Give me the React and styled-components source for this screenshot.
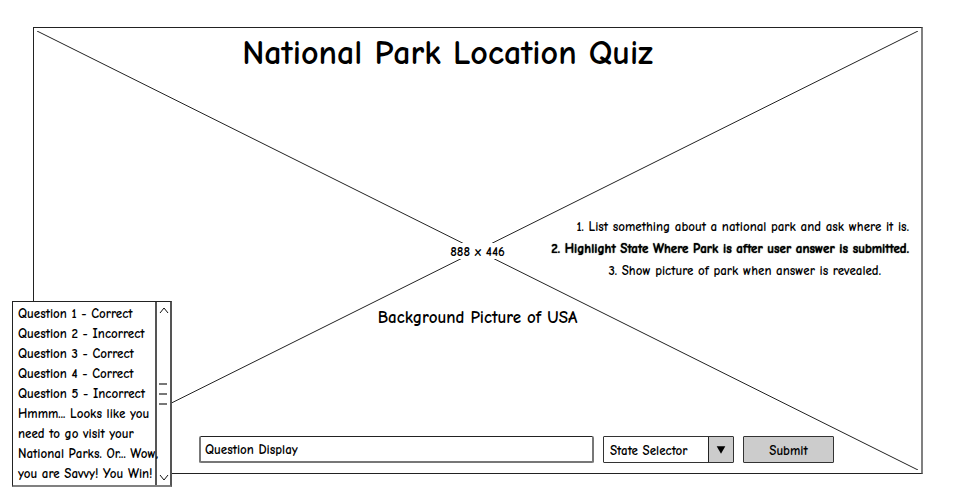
import React from "react";
import styled, { createGlobalStyle } from "styled-components";

const GlobalStyle = createGlobalStyle`
  *, *::before, *::after { box-sizing: border-box; }
  body {
    margin: 0;
    background: #fff;
    color: #000;
    font-family: "Comic Sans MS", "Comic Neue", "Noto Sans", sans-serif;
    font-size: 13px;
    font-weight: 700;
    line-height: 20px;
  }
  button, input, select { font: inherit; color: inherit; margin: 0; border-radius: 0; }
`;

const Page = styled.div`
  position: relative;
  display: flex;
  min-height: 100vh;
  padding: 27px 31px 26px 33px;
`;

const Board = styled.main`
  position: relative;
  flex: 1;
  display: flex;
  flex-direction: column;
  border: 1px solid #222;
  border-right: 2px solid #808080;
`;

const Backdrop = styled.svg`
  position: absolute;
  inset: 3px;
  width: calc(100% - 6px);
  height: calc(100% - 6px);
  stroke: #222;
  stroke-width: 1;
`;

const SizeLabel = styled.span`
  position: absolute;
  top: 50%;
  left: 50%;
  transform: translate(-50%, -50%);
  padding-top: 2px;
  background: #fff;
  line-height: 14px;
  white-space: nowrap;
`;

const Title = styled.h1`
  position: relative;
  margin: 0;
  padding: 0 60px 0 0;
  text-align: center;
  font-size: 34px;
  font-weight: 700;
  line-height: 50px;
`;

const Notes = styled.ol`
  position: relative;
  list-style: none;
  margin: auto 0 0;
  padding: 32px 12px 0 0;
  text-align: right;
  line-height: 22px;
`;

const Note = styled.li`
  text-shadow: ${(p) => (p.$strong ? "0 0 1px #000" : "none")};
  padding-right: ${(p) => (p.$inset ? 28 : 0)}px;
`;

const Caption = styled.p`
  position: relative;
  margin: 24px 0 auto;
  text-align: center;
  font-size: 17px;
  line-height: 24px;
`;

const AnswerBar = styled.form`
  position: relative;
  display: grid;
  grid-template-columns: 1fr 131px 91px;
  gap: 9px;
  height: 27px;
  margin: 0 87px 10px 165px;
`;

const QuestionField = styled.input`
  min-width: 0;
  padding: 2px 4px 0;
  background: #fff;
  border: 2px solid #777;
  border-top: 1px solid #222;
  border-radius: 2px;
`;

const SelectBox = styled.div`
  position: relative;
  display: grid;
`;

const StateSelect = styled.select`
  appearance: none;
  width: 100%;
  padding: 2px 30px 0 6px;
  background: linear-gradient(#ccc, #ccc) right / 24px 100% no-repeat #fff;
  border: 1px solid #333;
  border-radius: 1px;
`;

const SelectArrow = styled.svg`
  position: absolute;
  top: 1px;
  right: 1px;
  width: 25px;
  height: 25px;
  border-left: 1px solid #222;
  pointer-events: none;
`;

const SubmitButton = styled.button`
  padding: 2px 0 0;
  background: #ccc;
  border: 1px solid #333;
  border-radius: 1px;
`;

const Results = styled.aside`
  position: absolute;
  left: 12px;
  bottom: 13px;
  width: 160px;
  display: grid;
  grid-template-columns: 1fr 15px;
  background: #fff;
  border: 1px solid #222;
  border-right: 2px solid #555;
  border-bottom: 2px solid #808080;
`;

const ResultList = styled.ul`
  position: relative;
  z-index: 1;
  list-style: none;
  margin: 0;
  padding: 2px 0 1px 5px;
  white-space: nowrap;
  width: 0;
`;

const ScrollBar = styled.div`
  display: flex;
  flex-direction: column;
  justify-content: space-between;
  border-left: 2px solid #555;
`;

const ScrollButton = styled.button`
  display: grid;
  place-items: center;
  height: 16px;
  padding: 0;
  background: none;
  border: 0;
`;

const Grip = styled.span`
  display: block;
  height: 22px;
  margin: 0 3px 0 2px;
  border: solid #777;
  border-width: 2px 0;
  background: linear-gradient(#777, #777) center / 100% 2px no-repeat;
`;

const notes = [
  { text: "1. List something about a national park and ask where it is." },
  { text: "2. Highlight State Where Park is after user answer is submitted.", strong: true },
  { text: "3. Show picture of park when answer is revealed.", inset: true },
];

const results = [
  "Question 1 - Correct",
  "Question 2 - Incorrect",
  "Question 3 - Correct",
  "Question 4 - Correct",
  "Question 5 - Incorrect",
  "Hmmm... Looks like you",
  "need to go visit your",
  "National Parks. Or... Wow,",
  "you are Savvy! You Win!",
];

function Chevron({ points }) {
  return (
    <svg width="10" height="7" viewBox="0 0 10 7" fill="none" stroke="#111" aria-hidden="true">
      <polyline points={points} />
    </svg>
  );
}

export default function App() {
  return (
    <>
      <GlobalStyle />
      <Page>
        <Board>
          <Backdrop aria-hidden="true">
            <line x1="0" y1="0" x2="100%" y2="100%" />
            <line x1="0" y1="100%" x2="100%" y2="0" />
          </Backdrop>
          <SizeLabel>888 x 446</SizeLabel>
          <Title>National Park Location Quiz</Title>
          <Notes>
            {notes.map((n) => (
              <Note key={n.text} $strong={n.strong} $inset={n.inset}>{n.text}</Note>
            ))}
          </Notes>
          <Caption>Background Picture of USA</Caption>
          <AnswerBar onSubmit={(e) => e.preventDefault()}>
            <QuestionField aria-label="Question" defaultValue="Question Display" />
            <SelectBox>
              <StateSelect aria-label="State">
                <option>State Selector</option>
              </StateSelect>
              <SelectArrow viewBox="0 0 25 25" aria-hidden="true">
                <path d="M8 9h9l-4.5 8z" />
              </SelectArrow>
            </SelectBox>
            <SubmitButton type="submit">Submit</SubmitButton>
          </AnswerBar>
        </Board>
        <Results aria-label="Results">
          <ResultList>
            {results.map((line) => (
              <li key={line}>{line}</li>
            ))}
          </ResultList>
          <ScrollBar>
            <ScrollButton type="button" aria-label="Scroll up">
              <Chevron points="1,6 5,1 9,6" />
            </ScrollButton>
            <Grip />
            <ScrollButton type="button" aria-label="Scroll down">
              <Chevron points="1,1 5,6 9,1" />
            </ScrollButton>
          </ScrollBar>
        </Results>
      </Page>
    </>
  );
}
